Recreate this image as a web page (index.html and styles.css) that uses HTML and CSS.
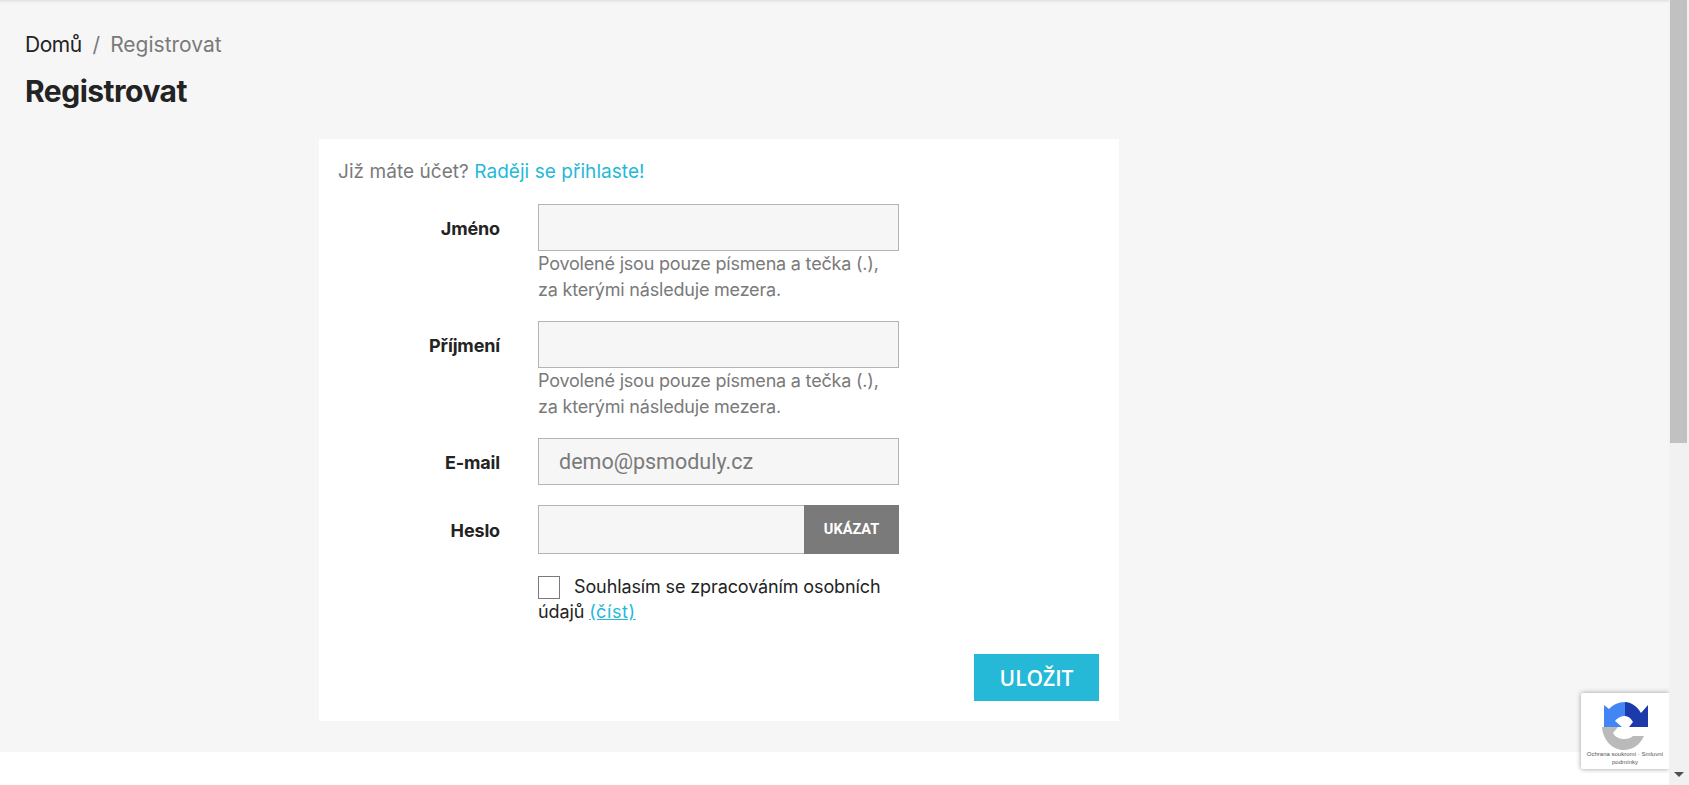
FILE: index.html
```html
<!DOCTYPE html>
<html lang="cs">
<head>
<meta charset="utf-8">
<title>Registrovat</title>
<link rel="stylesheet" href="styles.css">
</head>
<body>
<div class="shell">
  <div class="page">
    <main class="main">
      <nav class="crumbs"><a class="crumb-link" href="#">Domů</a><span class="crumb-sep">/</span><span class="crumb-now">Registrovat</span></nav>
      <h1 class="title">Registrovat</h1>
      <section class="card">
        <p class="login-line">Již máte účet? <a class="link" href="#">Raději se přihlaste!</a></p>
        <form class="form">
          <div class="row">
            <label class="label">Jméno</label>
            <div class="field">
              <input class="input" type="text">
              <p class="hint">Povolené jsou pouze písmena a tečka (.),<br>za kterými následuje mezera.</p>
            </div>
          </div>
          <div class="row">
            <label class="label">Příjmení</label>
            <div class="field">
              <input class="input" type="text">
              <p class="hint">Povolené jsou pouze písmena a tečka (.),<br>za kterými následuje mezera.</p>
            </div>
          </div>
          <div class="row row-short">
            <label class="label">E-mail</label>
            <div class="field">
              <input class="input input-mail" type="text" placeholder="demo@psmoduly.cz">
            </div>
          </div>
          <div class="row row-pass">
            <label class="label label-pass">Heslo</label>
            <div class="field pass">
              <input class="input input-pass" type="password">
              <button class="show" type="button">UKÁZAT</button>
            </div>
          </div>
          <div class="row row-consent">
            <span></span>
            <div class="field consent"><input class="check" type="checkbox"><span>Souhlasím se zpracováním osobních</span><br><span>údajů</span> <a class="link link-under" href="#">(číst)</a></div>
          </div>
          <div class="actions"><button class="save" type="button">ULOŽIT</button></div>
        </form>
      </section>
    </main>
    <div class="footer"></div>
    <aside class="captcha">
      <svg class="captcha-logo" viewBox="0 0 46 48" width="46" height="48" aria-hidden="true">
        <path fill="#1c3aa9" d="M23 0V14C26 14 29 16 31 20L27 25H46V3L39 11C35 4 29 0 23 0Z"/>
        <path fill="#4285f4" d="M23 0C16 0 11 3 7 7L2 3V25H20L13 19C15 16 19 14 23 14Z"/>
        <path fill="#bababa" d="M0 25H16L11 31C13 35 18 37 22 37C26 37 29 36 31 34L42 34C38 43 30 48 22 48C10 48 1 38 0 25Z"/>
      </svg>
      <div class="captcha-text">Ochrana soukromí · Smluvní podmínky</div>
    </aside>
  </div>
  <div class="scrollbar">
    <div class="thumb"></div>
    <div class="track"></div>
    <div class="arrow"></div>
  </div>
</div>
</body>
</html>
```
FILE: styles.css
```css
* { box-sizing: border-box; }
html, body { margin: 0; height: 100%; overflow: hidden; }
body { font-family: "Inter", "Noto Sans", sans-serif; color: #232323; background: #fff; }
.shell { display: flex; height: 785px; }
.page { position: relative; flex: 1; min-width: 0; display: flex; flex-direction: column; }
.main { height: 752px; background: #f6f6f6; padding: 29px 0 0 25px; box-shadow: inset 0 3px 3px -2px #d9d9d9; }
.crumbs { display: flex; align-items: center; height: 30px; font-size: 21px; letter-spacing: 0; }
.crumb-link { color: #232323; text-decoration: none; letter-spacing: -0.5px; }
.crumb-sep { color: #7a7a7a; margin: 0 10px 0 11px; }
.crumb-now { color: #7a7a7a; }
.title { margin: 14px 0 0; height: 36px; font-size: 30px; line-height: 36px; font-weight: 700; letter-spacing: -0.5px; color: #232323; }
.card { width: 800px; height: 582px; margin: 30px 0 0 294px; background: #fff; padding: 20px 20px 20px 19px; }
.login-line { margin: 0; height: 26px; font-size: 19px; line-height: 26px; letter-spacing: 0.05px; color: #7a7a7a; }
.link { color: #25b9d7; text-decoration: none; }
.link-under { text-decoration: underline; letter-spacing: 0.6px; }
.form { margin-top: 19px; }
.row { display: grid; grid-template-columns: 162px 361px; column-gap: 38px; height: 117px; }
.row-short { height: 67px; }
.row-pass { height: 71px; }
.row-consent { height: 78px; }
.label { text-align: right; font-size: 18px; font-weight: 700; line-height: 50px; letter-spacing: -0.15px; color: #232323; }
.label-pass { line-height: 52px; }
.input { display: block; width: 361px; height: 47px; background: #f6f6f6; border: 1px solid #b4b4b4; padding: 0 20px; font: 21.5px "Roboto", sans-serif; outline: none; }
.input-mail::placeholder { color: #7a7a7a; opacity: 1; }
.hint { margin: 0; font-size: 18px; line-height: 25.5px; letter-spacing: -0.2px; color: #7a7a7a; }
.pass { display: flex; height: 49px; }
.input-pass { width: 266px; height: 49px; border-right: 0; }
.show { width: 95px; height: 49px; border: 0; background: #7a7a7a; color: #fff; font: 700 14.5px "Roboto", sans-serif; padding: 0; }
.consent { font-size: 18px; line-height: 25px; letter-spacing: -0.12px; color: #232323; margin-top: -2px; }
.check { appearance: none; display: inline-block; vertical-align: top; width: 22px; height: 23px; margin: 2px 14px 0 0; background: #fff; border: 1px solid #7a7a7a; }
.actions { display: flex; justify-content: flex-end; }
.save { width: 125px; height: 47px; border: 0; background: #25b9d7; color: #fff; font: 600 21px "Open Sans", sans-serif; padding: 0; }
.footer { flex: 1; background: #fff; }
.captcha { position: absolute; left: 1581px; top: 693px; width: 88px; height: 76px; background: #fff; border-radius: 2px 0 0 2px; box-shadow: 0 0 5px #9a9a9a; display: flex; flex-direction: column; align-items: center; padding-top: 9px; overflow: hidden; }
.captcha-logo { flex: none; }
.captcha-text { margin-top: 0; font: 6px/8px "Liberation Sans", sans-serif; color: #555; text-align: center; }
.scrollbar { width: 20px; flex: none; display: flex; flex-direction: column; background: #f1f1f1; position: relative; }
.thumb { height: 443px; margin: 0 2px 0 1px; background: #c1c1c1; }
.track { flex: 1; }
.arrow { position: absolute; left: 5px; bottom: 8px; width: 0; height: 0; border-left: 5px solid transparent; border-right: 5px solid transparent; border-top: 5px solid #505050; }
```
